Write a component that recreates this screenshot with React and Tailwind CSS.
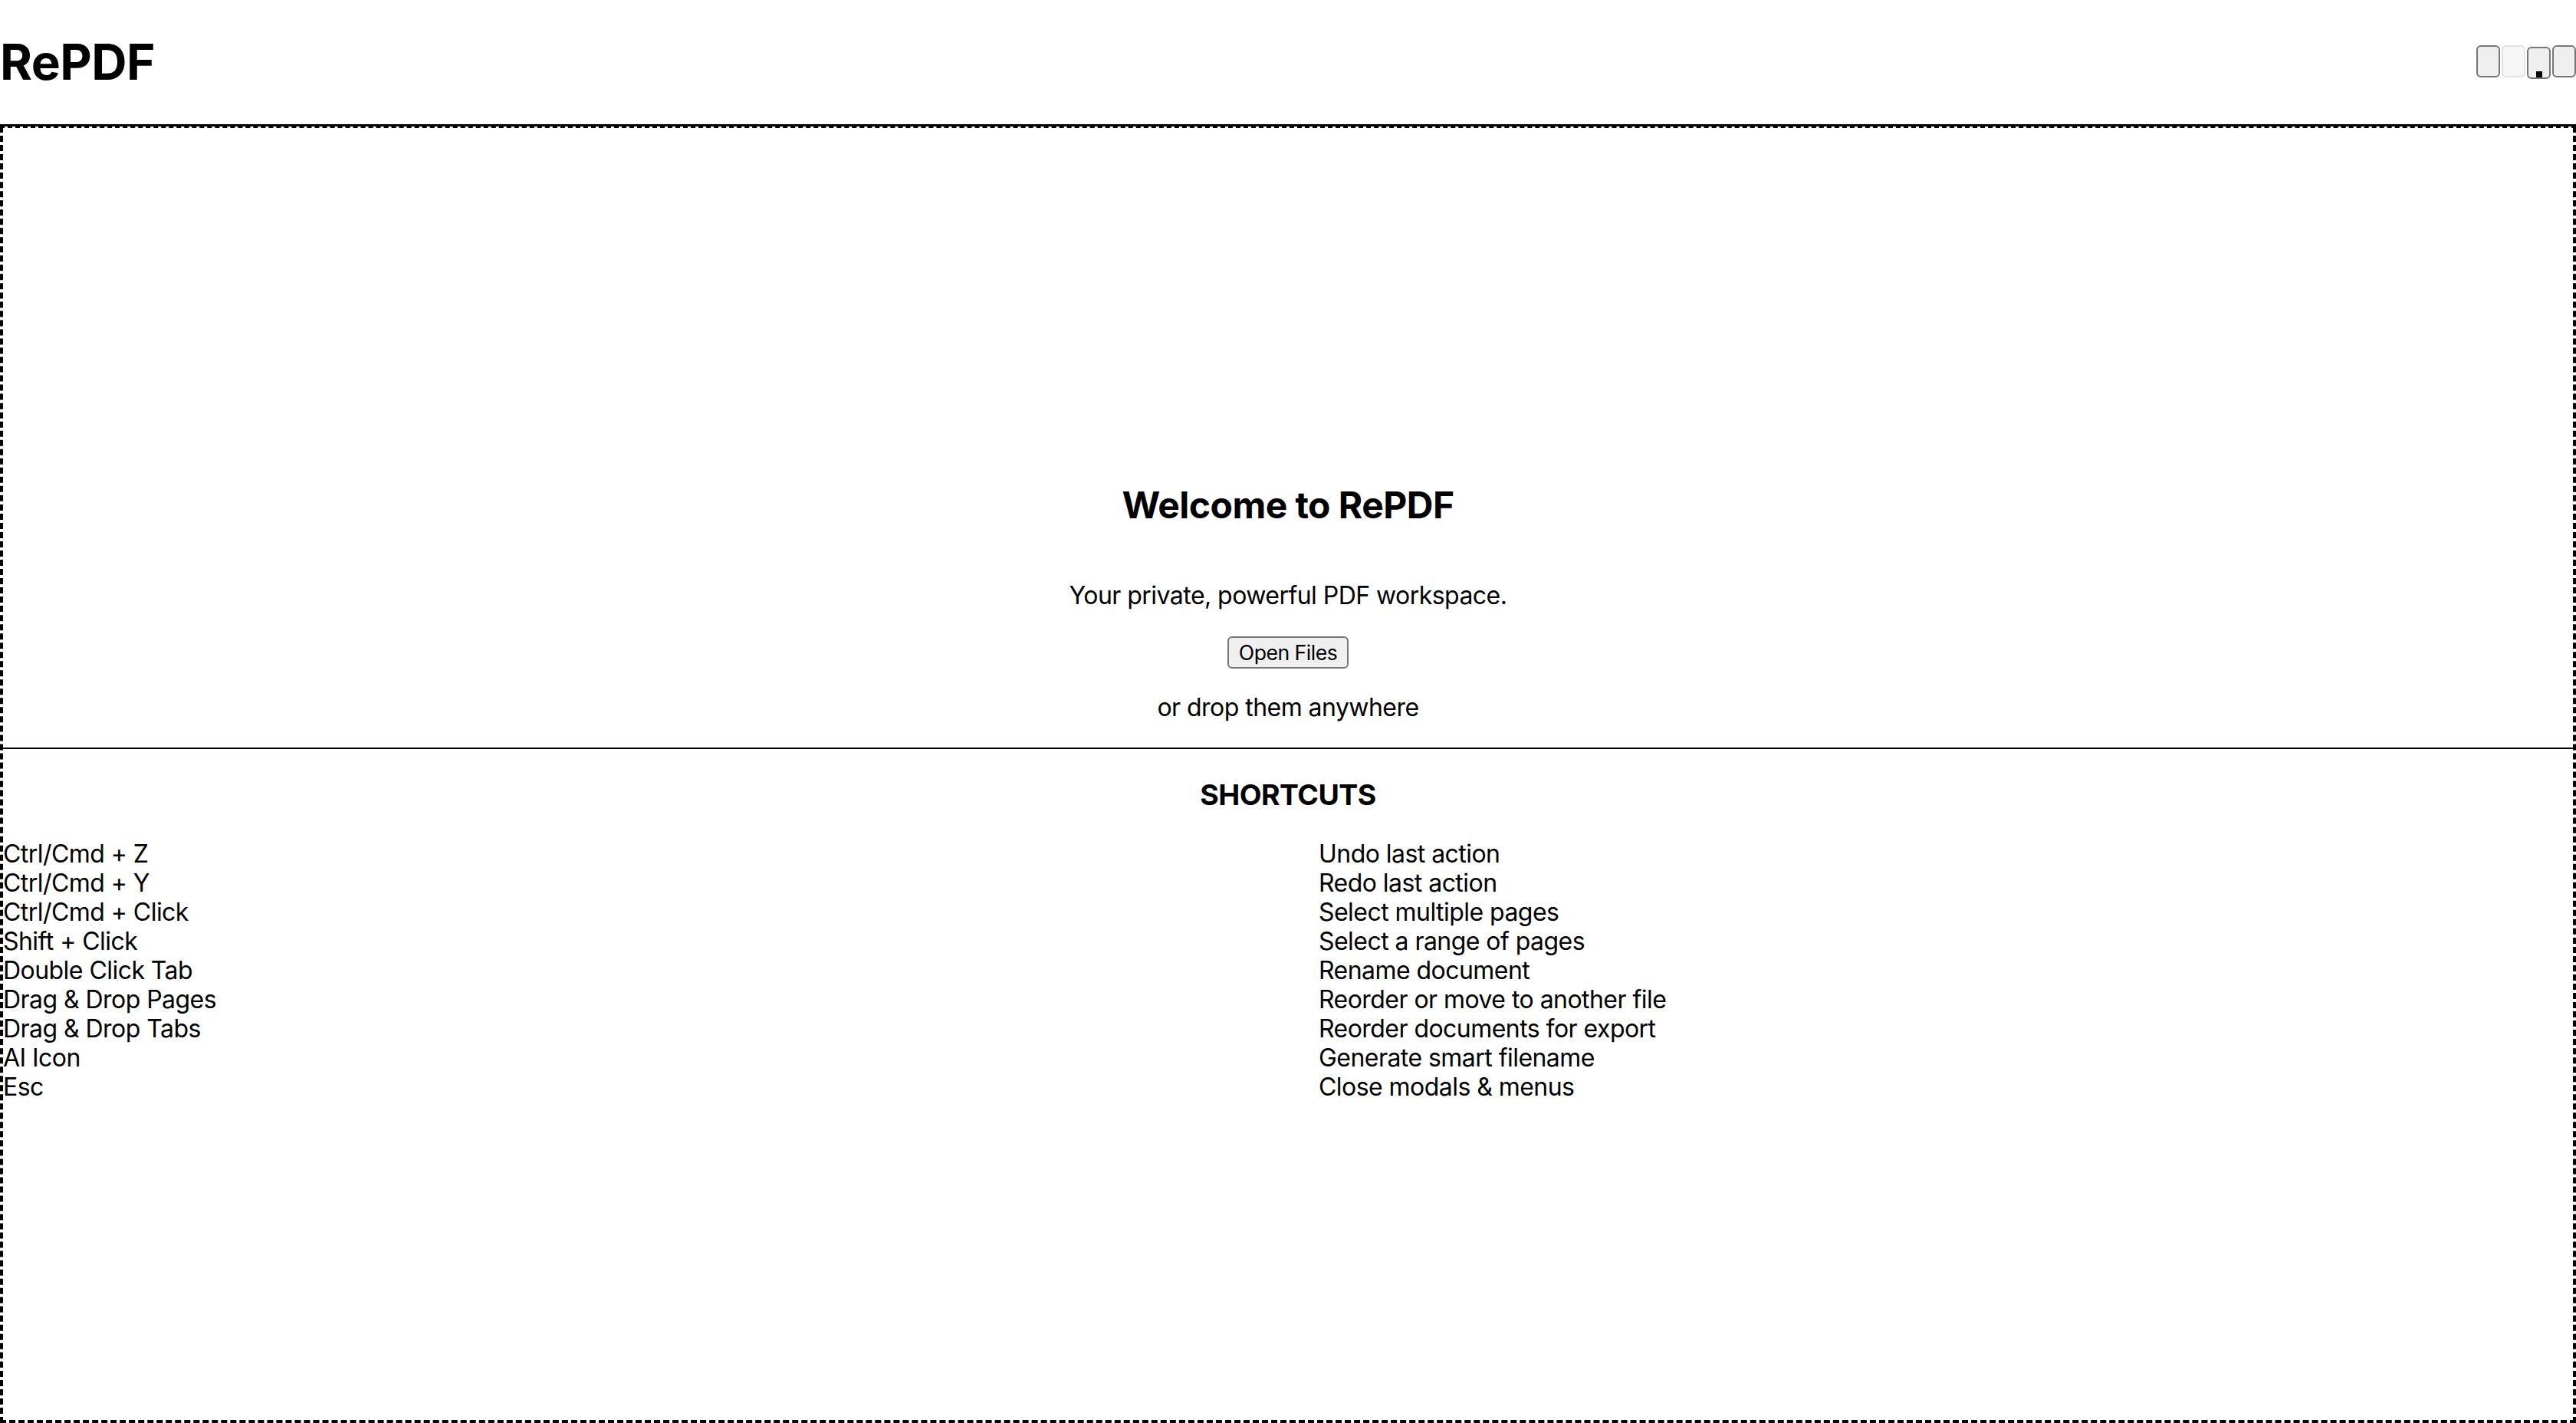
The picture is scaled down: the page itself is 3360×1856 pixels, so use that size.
const shortcuts = [
  ['Ctrl/Cmd + Z', 'Undo last action'],
  ['Ctrl/Cmd + Y', 'Redo last action'],
  ['Ctrl/Cmd + Click', 'Select multiple pages'],
  ['Shift + Click', 'Select a range of pages'],
  ['Double Click Tab', 'Rename document'],
  ['Drag & Drop Pages', 'Reorder or move to another file'],
  ['Drag & Drop Tabs', 'Reorder documents for export'],
  ['AI Icon', 'Generate smart filename'],
  ['Esc', 'Close modals & menus']
];

const toolButton = 'h-[42px] w-[31px] rounded-[6px] border-2 border-[#767676] bg-[#efefef]';

function App() {
  return (
    <div className="flex h-screen flex-col bg-white font-['Inter','Liberation_Sans',sans-serif] tracking-[-0.034em] text-black">
      <header className="flex h-[165px] shrink-0 items-center justify-between border-b-[3px] border-black">
        <h1 className="text-[64px] font-bold leading-[76px]">RePDF</h1>
        <div className="flex items-start gap-[2px]">
          <button className={toolButton} />
          <button disabled className="h-[42px] w-[31px] rounded-[6px] border-2 border-[#e2e2e2] bg-[#f7f7f7]" />
          <button className={`relative mt-[2px] ${toolButton}`}>
            <span className="absolute bottom-0 left-1/2 h-2 w-2 -translate-x-1/2 bg-black" />
          </button>
          <button className={toolButton} />
        </div>
      </header>

      <main className="flex flex-1 flex-col justify-center border-4 border-t-2 border-dashed border-black pt-[48px]">
        <div className="text-center">
          <h2 className="text-[48px] font-bold leading-[58px]">Welcome to RePDF</h2>
          <p className="mt-[70px] text-[32px] leading-[38px]">Your private, powerful PDF workspace.</p>
          <button className="mx-auto mt-[34px] block h-[42px] w-[158px] rounded-[6px] border-2 border-[#767676] bg-[#efefef] text-[26.67px] leading-[32px]">
            Open Files
          </button>
          <p className="mt-[32px] text-[32px] leading-[38px]">or drop them anywhere</p>
        </div>

        <hr className="mt-[33px] border-t-2 border-black" />

        <h3 className="mt-[38px] text-center text-[37.44px] font-bold leading-[44px]">SHORTCUTS</h3>
        <div className="mt-[36px] grid grid-cols-2 text-[32px] leading-[38px]">
          {shortcuts.map(([keys, action]) => (
            <div key={keys} className="contents">
              <span>{keys}</span>
              <span className="pl-[40px]">{action}</span>
            </div>
          ))}
        </div>
      </main>
    </div>
  );
}

export default App;
